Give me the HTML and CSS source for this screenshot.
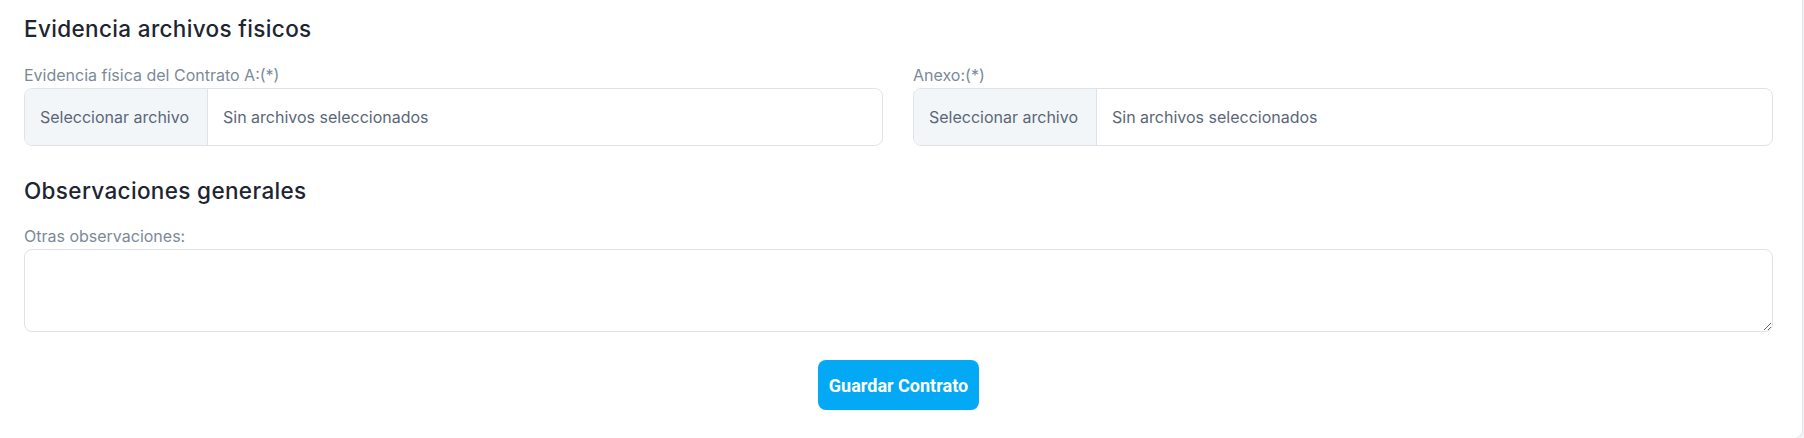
FILE: index.html
```html
<!DOCTYPE html>
<html lang="es">
<head>
<meta charset="utf-8">
<title>Evidencia archivos fisicos</title>
<link rel="stylesheet" href="styles.css">
</head>
<body>
<div class="card">
  <h2 class="section-title">Evidencia archivos fisicos</h2>
  <div class="grid-2">
    <div class="field">
      <span class="field-label">Evidencia física del Contrato A:(*)</span>
      <label class="file-input">
        <span class="file-btn">Seleccionar archivo</span>
        <span class="file-name">Sin archivos seleccionados</span>
        <input type="file" class="file-native">
      </label>
    </div>
    <div class="field">
      <span class="field-label">Anexo:(*)</span>
      <label class="file-input">
        <span class="file-btn">Seleccionar archivo</span>
        <span class="file-name">Sin archivos seleccionados</span>
        <input type="file" class="file-native">
      </label>
    </div>
  </div>
  <h2 class="section-title second">Observaciones generales</h2>
  <div class="field">
    <label class="field-label" for="obs">Otras observaciones:</label>
    <textarea id="obs" class="textarea"></textarea>
  </div>
  <div class="actions">
    <button class="btn-primary" type="button">Guardar Contrato</button>
  </div>
</div>
</body>
</html>
```
FILE: styles.css
```css
* { box-sizing: border-box; }
html, body { margin: 0; padding: 0; }
body {
  background: #f3f4f6;
  font-family: Inter, "Noto Sans", sans-serif;
  color: #1f2733;
}
.card {
  width: 1803px;
  background: #fff;
  border-right: 1px solid #e2e5e9;
  border-bottom: 1px solid #e2e5e9;
  border-bottom-right-radius: 9px;
  padding: 16px 29px 28px 24px;
}
.section-title {
  margin: 0;
  font-size: 22.5px;
  line-height: 26px;
  font-weight: 500;
  color: #1e2532;
  letter-spacing: 0.35px;
}
.section-title.second { margin-top: 32px; }
.grid-2 {
  display: grid;
  grid-template-columns: 859px 860px;
  column-gap: 30px;
  margin-top: 22px;
}
.section-title.second + .field { margin-top: 21px; }
.field { display: flex; flex-direction: column; }
.field-label {
  font-size: 16px;
  line-height: 22px;
  color: #7b8a99;
  margin-bottom: 2px;
}
.file-input {
  display: flex;
  height: 58px;
  border: 1px solid #dfe3e8;
  border-radius: 8px;
  overflow: hidden;
  font-size: 16px;
  color: #5a6777;
  cursor: pointer;
}
.file-btn {
  display: flex;
  align-items: center;
  width: 183px;
  padding: 0 15px;
  background: #f3f6f9;
  border-right: 1px solid #dfe3e8;
  white-space: nowrap;
}
.file-name {
  display: flex;
  align-items: center;
  padding: 0 15px;
  white-space: nowrap;
}
.file-native { display: none; }
.textarea {
  height: 83px;
  border: 1px solid #dfe3e8;
  border-radius: 8px;
  font-family: inherit;
  font-size: 16px;
  padding: 12px 15px;
  color: #5a6777;
  resize: vertical;
}
.actions {
  display: flex;
  justify-content: center;
  margin-top: 28px;
}
.btn-primary {
  width: 161px;
  height: 50px;
  border: none;
  border-radius: 8px;
  background: #03a9f4;
  color: #fff;
  font-family: Roboto, Inter, sans-serif;
  font-weight: 700;
  font-size: 18px;
  cursor: pointer;
}
```
